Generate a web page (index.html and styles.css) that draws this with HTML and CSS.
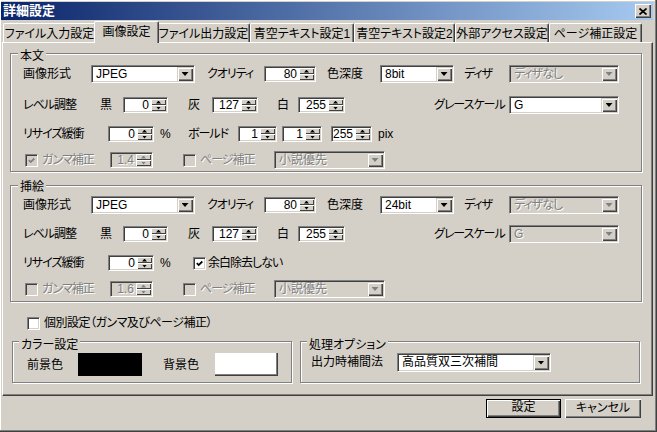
FILE: index.html
```html
<!DOCTYPE html>
<html lang="ja">
<head>
<meta charset="utf-8">
<title>詳細設定</title>
<link rel="stylesheet" href="styles.css">
</head>
<body>
<div class="window">
  <div class="titlebar">
    <span class="title">詳細設定</span>
    <span class="close"><svg width="8" height="7" viewBox="0 0 8 7"><path d="M0.5 0.5 L7.5 6.5 M7.5 0.5 L0.5 6.5" stroke="#000" stroke-width="1.7"/></svg></span>
  </div>
  <div class="tabs">
    <div class="tab w93">ファイル入力設定</div>
    <div class="tab sel">画像設定</div>
    <div class="tab w93">ファイル出力設定</div>
    <div class="tab w104">青空テキスト設定1</div>
    <div class="tab w101">青空テキスト設定2</div>
    <div class="tab w94">外部アクセス設定</div>
    <div class="tab w93">ページ補正設定</div>
  </div>
  <div class="panel">
    <section class="group g1">
      <div class="gt">本文</div>
      <div class="row">
        <span class="lbl w68">画像形式</span>
        <div class="combo w104"><span class="t">JPEG</span><span class="dd"></span></div>
        <span class="lbl nar ml12 w57">クオリティ</span>
        <div class="spin w52"><span class="v">80</span><span class="b"><i class="up"></i><i class="dn"></i></span></div>
        <span class="lbl ml11 w53">色深度</span>
        <div class="combo w74"><span class="t">8bit</span><span class="dd"></span></div>
        <span class="lbl nar ml10 w45">ディザ</span>
        <div class="combo w110 dis"><span class="t nar">ディザなし</span><span class="dd"></span></div>
      </div>
      <div class="row mt11">
        <span class="lbl nar w77">レベル調整</span>
        <span class="lbl w23">黒</span>
        <div class="spin w45"><span class="v">0</span><span class="b"><i class="up"></i><i class="dn"></i></span></div>
        <span class="lbl ml20 w24">灰</span>
        <div class="spin w46"><span class="v">127</span><span class="b"><i class="up"></i><i class="dn"></i></span></div>
        <span class="lbl ml19 w21">白</span>
        <div class="spin w47"><span class="v">255</span><span class="b"><i class="up"></i><i class="dn"></i></span></div>
        <span class="lbl nar ml89 w75">グレースケール</span>
        <div class="combo w110"><span class="t">G</span><span class="dd"></span></div>
      </div>
      <div class="row mt9">
        <span class="lbl nar w85">リサイズ緩衝</span>
        <div class="spin w46"><span class="v">0</span><span class="b"><i class="up"></i><i class="dn"></i></span></div>
        <span class="lbl ml6 w28">%</span>
        <span class="lbl nar w50">ボールド</span>
        <div class="spin w39"><span class="v">1</span><span class="b"><i class="up"></i><i class="dn"></i></span></div>
        <div class="spin ml5 w40"><span class="v">1</span><span class="b"><i class="up"></i><i class="dn"></i></span></div>
        <div class="spin ml9 w41"><span class="v">255</span><span class="b"><i class="up"></i><i class="dn"></i></span></div>
        <span class="lbl ml6">pix</span>
      </div>
      <div class="row mt6">
        <span class="cb dis ml2"><svg width="7" height="7" viewBox="0 0 7 7"><polyline points="0.8,3.2 2.7,5.1 6.3,1.5" fill="none" stroke="#808080" stroke-width="1.8"/></svg></span>
        <span class="lbl nar dtxt ml4 w68">ガンマ補正</span>
        <div class="spin dis w43"><span class="v">1.4</span><span class="b"><i class="up"></i><i class="dn"></i></span></div>
        <span class="cb dis ml30"></span>
        <span class="lbl nar dtxt ml4 w74">ページ補正</span>
        <div class="combo dis w111"><span class="t">小説優先</span><span class="dd"></span></div>
      </div>
    </section>

    <section class="group g2">
      <div class="gt">挿絵</div>
      <div class="row">
        <span class="lbl w68">画像形式</span>
        <div class="combo w104"><span class="t">JPEG</span><span class="dd"></span></div>
        <span class="lbl nar ml12 w57">クオリティ</span>
        <div class="spin w52"><span class="v">80</span><span class="b"><i class="up"></i><i class="dn"></i></span></div>
        <span class="lbl ml11 w53">色深度</span>
        <div class="combo w74"><span class="t">24bit</span><span class="dd"></span></div>
        <span class="lbl nar ml10 w45">ディザ</span>
        <div class="combo w110 dis"><span class="t nar">ディザなし</span><span class="dd"></span></div>
      </div>
      <div class="row mt9">
        <span class="lbl nar w77">レベル調整</span>
        <span class="lbl w23">黒</span>
        <div class="spin w45"><span class="v">0</span><span class="b"><i class="up"></i><i class="dn"></i></span></div>
        <span class="lbl ml20 w24">灰</span>
        <div class="spin w46"><span class="v">127</span><span class="b"><i class="up"></i><i class="dn"></i></span></div>
        <span class="lbl ml19 w21">白</span>
        <div class="spin w47"><span class="v">255</span><span class="b"><i class="up"></i><i class="dn"></i></span></div>
        <span class="lbl nar ml89 w75">グレースケール</span>
        <div class="combo w110 dis"><span class="t">G</span><span class="dd"></span></div>
      </div>
      <div class="row mt9">
        <span class="lbl nar w85">リサイズ緩衝</span>
        <div class="spin w46"><span class="v">0</span><span class="b"><i class="up"></i><i class="dn"></i></span></div>
        <span class="lbl ml6 w27">%</span>
        <span class="cb ml6"><svg width="7" height="7" viewBox="0 0 7 7"><polyline points="0.8,3.2 2.7,5.1 6.3,1.5" fill="none" stroke="#000" stroke-width="1.8"/></svg></span>
        <span class="lbl nar ml2">余白除去しない</span>
      </div>
      <div class="row mt6">
        <span class="cb dis ml2"></span>
        <span class="lbl nar dtxt ml4 w68">ガンマ補正</span>
        <div class="spin dis w43"><span class="v">1.6</span><span class="b"><i class="up"></i><i class="dn"></i></span></div>
        <span class="cb dis ml30"></span>
        <span class="lbl nar dtxt ml4 w74">ページ補正</span>
        <div class="combo dis w111"><span class="t">小説優先</span><span class="dd"></span></div>
      </div>
    </section>

    <div class="row chkrow">
      <span class="cb"></span>
      <span class="lbl nar2 ml4">個別設定（ガンマ及びページ補正）</span>
    </div>

    <div class="bottomrow">
      <section class="group color">
        <div class="gt gt6">カラー設定</div>
        <div class="swrow">
          <span class="lbl w51">前景色</span>
          <span class="swatch black"></span>
          <span class="lbl ml21 w52">背景色</span>
          <span class="swatch white"></span>
        </div>
      </section>
      <section class="group opt">
        <div class="gt gt6">処理オプション</div>
        <div class="optrow">
          <span class="lbl w86">出力時補間法</span>
          <div class="combo big w154"><span class="t">高品質双三次補間</span><span class="dd"></span></div>
        </div>
      </section>
    </div>
  </div>
  <div class="buttons">
    <div class="btn default">設定</div>
    <div class="btn cancel">キャンセル</div>
  </div>
</div>
</body>
</html>
```
FILE: styles.css
```css
* { box-sizing: border-box; }

body {
  margin: 0;
  background: #d4d0c8;
  color: #000;
  font-family: "Liberation Sans", "Noto Sans CJK JP", sans-serif;
  font-size: 12px;
  line-height: 14px;
  font-feature-settings: "palt";
}

.window {
  width: 657px;
  height: 432px;
  background: #d4d0c8;
  padding: 2px 4px 0 1px;
  box-shadow: inset -1px -1px #404040, inset -2px -2px #808080, inset 1px 1px #ffffff;
  display: flex;
  flex-direction: column;
}

/* title bar */
.titlebar {
  height: 18px;
  background: linear-gradient(to right, #0a246a, #a6caf0);
  display: flex;
  align-items: center;
  justify-content: space-between;
  padding: 0 2px;
}
.title {
  color: #fff;
  font-weight: bold;
  font-size: 13px;
  line-height: 16px;
}
.close {
  width: 16px;
  height: 14px;
  background: #d4d0c8;
  box-shadow: inset 1px 1px #fff, inset -1px -1px #404040, inset -2px -2px #808080;
  display: flex;
  align-items: center;
  justify-content: center;
}
.close svg { display: block; }

/* tabs */
.tabs {
  display: flex;
  align-items: flex-end;
  height: 21px;
  margin-top: 1px;
  padding-left: 2px;
}
.tab {
  height: 19px;
  padding-top: 2px;
  line-height: 16px;
  text-align: center;
  white-space: nowrap;
  background: #d4d0c8;
  border-top: 1px solid #fff;
  border-left: 1px solid #fff;
  border-right: 1px solid #404040;
  box-shadow: inset -1px 0 #808080;
  border-radius: 2px 2px 0 0;
}
.tab.sel {
  width: 65px;
  height: 22px;
  margin: 0 -2px -1px;
  padding-top: 1px;
  line-height: 18px;
  position: relative;
  z-index: 1;
}

/* panel */
.panel {
  margin-left: 1px;
  width: 651px;
  height: 354px;
  border: 1px solid;
  border-color: #fff #404040 #404040 #fff;
  box-shadow: inset -1px -1px #808080;
}

/* group boxes (etched frame with caption sitting on the top line) */
.group {
  border: 1px solid #808080;
  box-shadow: inset 1px 1px #fff, 1px 1px #fff;
}
.gt {
  width: max-content;
  margin: -8px 0 0 7px;
  padding: 0 2px;
  line-height: 15px;
  background: #d4d0c8;
}
.gt6 { margin-left: 6px; }
.g1 { width: 632px; margin: 10px 0 0 7px; padding: 3px 0 1px 0; }
.g2 { width: 632px; margin: 13px 0 0 7px; padding: 2px 0 2px 0; }

.row {
  display: flex;
  align-items: center;
  height: 20px;
  margin-left: 12px;
  white-space: nowrap;
}
.chkrow { margin: 11px 0 0 24px; }

.lbl { flex: none; }
.nar { letter-spacing: -1px; }
.nar2 { letter-spacing: -0.5px; }
.dtxt { color: #808080; text-shadow: 1px 1px 0 #fff; }

/* spin edit */
.spin {
  flex: none;
  display: flex;
  height: 16px;
  padding: 1px;
  background: #fff;
  border: 1px solid;
  border-color: #808080 #fff #fff #808080;
  box-shadow: inset 1px 1px #404040, inset -1px -1px #d4d0c8;
}
.spin .v {
  flex: 1;
  text-align: right;
  padding-right: 2px;
  line-height: 12px;
}
.spin .b {
  width: 15px;
  display: flex;
  flex-direction: column;
}
.spin .b i {
  flex: 1;
  background: #d4d0c8;
  box-shadow: inset 1px 1px #fff, inset -1px -1px #404040;
  display: flex;
  align-items: center;
  justify-content: center;
}
.spin .b i::after {
  content: "";
  width: 5px;
  height: 3px;
  background: #000;
}
.spin .b i.up::after { clip-path: polygon(50% 0, 100% 100%, 0 100%); }
.spin .b i.dn::after { clip-path: polygon(0 0, 100% 0, 50% 100%); }
.spin.dis { background: #d4d0c8; }
.spin.dis .v { color: #808080; text-shadow: 1px 1px 0 #fff; }
.spin.dis .b i::after { background: #808080; }

/* combo */
.combo {
  flex: none;
  display: flex;
  height: 18px;
  padding: 1px;
  background: #fff;
  border: 1px solid;
  border-color: #808080 #fff #fff #808080;
  box-shadow: inset 1px 1px #404040, inset -1px -1px #d4d0c8;
}
.combo .t {
  flex: 1;
  padding-left: 3px;
  line-height: 14px;
  overflow: hidden;
  white-space: nowrap;
}
.combo .dd {
  width: 16px;
  background: #d4d0c8;
  box-shadow: inset 1px 1px #d4d0c8, inset 2px 2px #fff, inset -1px -1px #404040, inset -2px -2px #808080;
  display: flex;
  align-items: center;
  justify-content: center;
}
.combo .dd::after {
  content: "";
  width: 7px;
  height: 4px;
  background: #000;
  clip-path: polygon(0 0, 100% 0, 50% 100%);
}
.combo.dis { background: #d4d0c8; }
.combo.dis .t { color: #808080; text-shadow: 1px 1px 0 #fff; }
.combo.dis .dd::after { background: #808080; }
.combo.big { height: 19px; }
.combo.big .t { line-height: 15px; }

/* checkbox */
.cb {
  flex: none;
  width: 13px;
  height: 13px;
  background: #fff;
  border: 1px solid;
  border-color: #808080 #fff #fff #808080;
  box-shadow: inset 1px 1px #404040, inset -1px -1px #d4d0c8;
  display: flex;
  align-items: center;
  justify-content: center;
}
.cb.dis { background: #d4d0c8; }
.cb svg { display: block; }

/* bottom groups */
.bottomrow {
  display: flex;
  margin: 8px 0 0 9px;
}
.color { width: 280px; padding: 4px 0 6px 0; }
.opt { width: 340px; margin-left: 8px; padding: 4px 0 6px 0; }
.swrow {
  display: flex;
  align-items: center;
  height: 23px;
  margin-left: 14px;
}
.optrow {
  display: flex;
  align-items: flex-start;
  height: 23px;
  margin-left: 10px;
}
.optrow .lbl { line-height: 19px; }
.swatch { flex: none; height: 23px; }
.swatch.black { width: 64px; background: #000; }
.swatch.white { width: 63px; background: #fff; box-shadow: inset -1px -1px #404040, inset -2px -2px #808080; }

/* buttons */
.buttons {
  display: flex;
  justify-content: flex-end;
  gap: 4px;
  margin-top: 3px;
  padding-right: 12px;
}
.btn {
  height: 19px;
  line-height: 17px;
  text-align: center;
  background: #d4d0c8;
  box-shadow: inset 1px 1px #fff, inset -1px -1px #404040, inset -2px -2px #808080;
}
.btn.default {
  width: 75px;
  border: 1px solid #000;
  line-height: 15px;
}
.btn.cancel { width: 76px; line-height: 19px; }

/* sizing utilities */
.w21 { width: 21px; } .w23 { width: 23px; } .w24 { width: 24px; }
.w27 { width: 27px; } .w28 { width: 28px; }
.w39 { width: 39px; } .w40 { width: 40px; } .w41 { width: 41px; }
.w43 { width: 43px; } .w45 { width: 45px; } .w46 { width: 46px; }
.w47 { width: 47px; } .w50 { width: 50px; } .w51 { width: 51px; }
.w52 { width: 52px; } .w53 { width: 53px; } .w57 { width: 57px; }
.w68 { width: 68px; } .w74 { width: 74px; } .w75 { width: 75px; }
.w77 { width: 77px; } .w85 { width: 85px; } .w86 { width: 86px; }
.w93 { width: 93px; } .w94 { width: 94px; } .w101 { width: 101px; }
.w104 { width: 104px; } .w110 { width: 110px; } .w111 { width: 111px; }
.w154 { width: 154px; }
.ml2 { margin-left: 2px; } .ml4 { margin-left: 4px; } .ml5 { margin-left: 5px; }
.ml6 { margin-left: 6px; } .ml9 { margin-left: 9px; } .ml10 { margin-left: 10px; }
.ml11 { margin-left: 11px; } .ml12 { margin-left: 12px; } .ml19 { margin-left: 19px; }
.ml20 { margin-left: 20px; } .ml21 { margin-left: 21px; } .ml30 { margin-left: 30px; }
.ml89 { margin-left: 89px; }
.mt6 { margin-top: 6px; } .mt9 { margin-top: 9px; } .mt11 { margin-top: 11px; }
```
